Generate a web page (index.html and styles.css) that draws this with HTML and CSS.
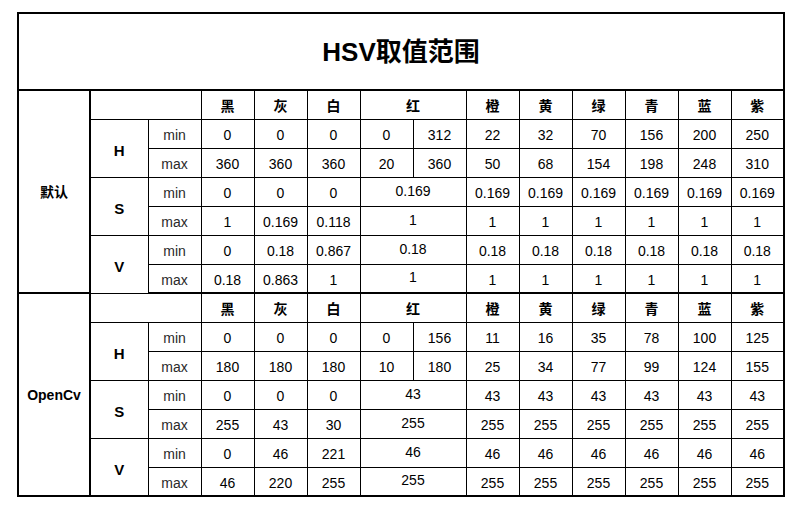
FILE: index.html
```html
<!DOCTYPE html>
<html lang="zh">
<head>
<meta charset="utf-8">
<title>HSV取值范围</title>
<link rel="stylesheet" href="styles.css">
</head>
<body>
<table class="hsv">
  <colgroup>
    <col class="c-sec"><col class="c-ch"><col class="c-mm">
    <col class="c-v"><col class="c-v"><col class="c-v"><col class="c-v"><col class="c-v">
    <col class="c-v"><col class="c-v"><col class="c-v"><col class="c-v"><col class="c-v"><col class="c-v">
  </colgroup>
  <tr class="title-row"><td colspan="14" class="title">HSV取值范围</td></tr>

  <tr class="head">
    <td rowspan="7" class="sec">默认</td>
    <td colspan="2"></td>
    <td class="cn">黑</td><td class="cn">灰</td><td class="cn">白</td><td class="cn" colspan="2">红</td>
    <td class="cn">橙</td><td class="cn">黄</td><td class="cn">绿</td><td class="cn">青</td><td class="cn">蓝</td><td class="cn">紫</td>
  </tr>
  <tr><td rowspan="2" class="ch">H</td><td class="mm">min</td>
    <td>0</td><td>0</td><td>0</td><td>0</td><td>312</td><td>22</td><td>32</td><td>70</td><td>156</td><td>200</td><td>250</td></tr>
  <tr><td class="mm">max</td>
    <td>360</td><td>360</td><td>360</td><td>20</td><td>360</td><td>50</td><td>68</td><td>154</td><td>198</td><td>248</td><td>310</td></tr>
  <tr><td rowspan="2" class="ch">S</td><td class="mm">min</td>
    <td>0</td><td>0</td><td>0</td><td colspan="2" class="merged">0.169</td><td>0.169</td><td>0.169</td><td>0.169</td><td>0.169</td><td>0.169</td><td>0.169</td></tr>
  <tr><td class="mm">max</td>
    <td>1</td><td>0.169</td><td>0.118</td><td colspan="2" class="merged">1</td><td>1</td><td>1</td><td>1</td><td>1</td><td>1</td><td>1</td></tr>
  <tr><td rowspan="2" class="ch">V</td><td class="mm">min</td>
    <td>0</td><td>0.18</td><td>0.867</td><td colspan="2" class="merged">0.18</td><td>0.18</td><td>0.18</td><td>0.18</td><td>0.18</td><td>0.18</td><td>0.18</td></tr>
  <tr class="sec-end"><td class="mm">max</td>
    <td>0.18</td><td>0.863</td><td>1</td><td colspan="2" class="merged">1</td><td>1</td><td>1</td><td>1</td><td>1</td><td>1</td><td>1</td></tr>

  <tr class="head">
    <td rowspan="7" class="sec">OpenCv</td>
    <td colspan="2"></td>
    <td class="cn">黑</td><td class="cn">灰</td><td class="cn">白</td><td class="cn" colspan="2">红</td>
    <td class="cn">橙</td><td class="cn">黄</td><td class="cn">绿</td><td class="cn">青</td><td class="cn">蓝</td><td class="cn">紫</td>
  </tr>
  <tr><td rowspan="2" class="ch">H</td><td class="mm">min</td>
    <td>0</td><td>0</td><td>0</td><td>0</td><td>156</td><td>11</td><td>16</td><td>35</td><td>78</td><td>100</td><td>125</td></tr>
  <tr><td class="mm">max</td>
    <td>180</td><td>180</td><td>180</td><td>10</td><td>180</td><td>25</td><td>34</td><td>77</td><td>99</td><td>124</td><td>155</td></tr>
  <tr><td rowspan="2" class="ch">S</td><td class="mm">min</td>
    <td>0</td><td>0</td><td>0</td><td colspan="2" class="merged">43</td><td>43</td><td>43</td><td>43</td><td>43</td><td>43</td><td>43</td></tr>
  <tr><td class="mm">max</td>
    <td>255</td><td>43</td><td>30</td><td colspan="2" class="merged">255</td><td>255</td><td>255</td><td>255</td><td>255</td><td>255</td><td>255</td></tr>
  <tr><td rowspan="2" class="ch">V</td><td class="mm">min</td>
    <td>0</td><td>46</td><td>221</td><td colspan="2" class="merged">46</td><td>46</td><td>46</td><td>46</td><td>46</td><td>46</td><td>46</td></tr>
  <tr><td class="mm">max</td>
    <td>46</td><td>220</td><td>255</td><td colspan="2" class="merged">255</td><td>255</td><td>255</td><td>255</td><td>255</td><td>255</td><td>255</td></tr>
</table>
</body>
</html>
```

FILE: styles.css
```css
html, body {
  margin: 0;
  padding: 0;
  background: #ffffff;
}
body {
  padding: 12px 0 0 17px;
  font-family: "Liberation Sans", "Noto Sans CJK SC", sans-serif;
  color: #000;
}
.hsv {
  border-collapse: collapse;
  table-layout: fixed;
  width: 767px;
  border: 2px solid #000;
}
.c-sec { width: 72px; }
.c-ch { width: 58px; }
.c-mm { width: 53px; }
.c-v { width: 53px; }
.hsv td {
  border: 1px solid #000;
  height: 29px;
  padding: 3px 0 0 0;
  text-align: center;
  vertical-align: middle;
  font-size: 14px;
  line-height: 16px;
  box-sizing: border-box;
}
.hsv td.merged { padding-top: 0; padding-bottom: 2px; }
.hsv .title-row td {
  height: 77px;
  font-size: 26px;
  font-weight: bold;
  line-height: 30px;
  border-bottom: 2px solid #000;
  padding: 0;
}
.hsv td.sec {
  font-weight: bold;
  border-right: 2px solid #000;
  padding-top: 0;
}
.hsv td.cn {
  font-family: "Noto Sans CJK SC", sans-serif;
  font-weight: bold;
  padding-top: 0;
}
.hsv td.ch {
  font-weight: bold;
  font-size: 15px;
  padding-top: 6px;
}
.hsv td.mm { color: #2a2a2a; }
.hsv tr.sec-end td { border-bottom: 2px solid #000; }
.hsv tr.sec-end + tr td.sec { border-top: 2px solid #000; }
```
